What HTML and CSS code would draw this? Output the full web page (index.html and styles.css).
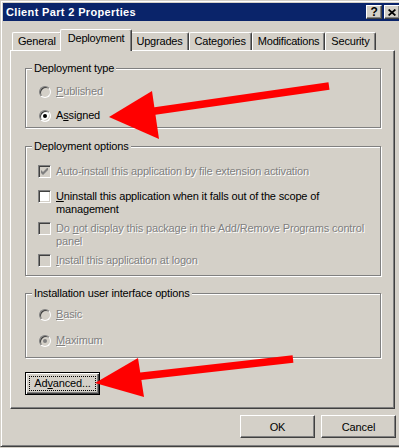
FILE: index.html
```html
<!DOCTYPE html>
<html lang="en">
<head>
    <meta charset="UTF-8">
    <meta name="viewport" content="width=device-width, initial-scale=1.0">
    <title>Client Part 2 Properties</title>
    <link rel="stylesheet" href="styles.css">
</head>
<body>
    <div class="window">
        <div class="titlebar">
            <span class="title">Client Part 2 Properties</span>
            <div class="caption-buttons">
                <span class="caption-btn help">?</span>
                <span class="caption-btn close">
                    <svg width="8" height="7" viewBox="0 0 8 7"><path d="M0.6 0.5 L7.4 6.5 M7.4 0.5 L0.6 6.5" stroke="#000" stroke-width="1.7"/></svg>
                </span>
            </div>
        </div>

        <div class="dialog">
            <div class="tabs">
                <div class="tab">General</div>
                <div class="tab selected">Deployment</div>
                <div class="tab">Upgrades</div>
                <div class="tab">Categories</div>
                <div class="tab">Modifications</div>
                <div class="tab">Security</div>
            </div>

            <div class="panel">
                <fieldset class="group group-type">
                    <legend>Deployment type</legend>
                    <div class="option disabled">
                        <span class="mark"><span class="radio"></span></span>
                        <span class="label"><u>P</u>ublished</span>
                    </div>
                    <div class="option gap-radio">
                        <span class="mark"><span class="radio checked"></span></span>
                        <span class="label">A<u>s</u>signed</span>
                    </div>
                </fieldset>

                <fieldset class="group group-options">
                    <legend>Deployment options</legend>
                    <div class="option disabled">
                        <span class="mark"><span class="check checked"><svg width="7" height="7" viewBox="0 0 7 7"><path d="M0 2 L2 4 L7 -1 L7 2 L2 7 L0 5 Z"/></svg></span></span>
                        <span class="label">Auto-install this application by file extension activation</span>
                    </div>
                    <div class="option gap-wide">
                        <span class="mark"><span class="check"></span></span>
                        <span class="label"><u>U</u>ninstall this application when it falls out of the scope of<br>management</span>
                    </div>
                    <div class="option disabled gap-check">
                        <span class="mark"><span class="check"></span></span>
                        <span class="label">Do <u>n</u>ot display this package in the Add/Remove Programs control<br>panel</span>
                    </div>
                    <div class="option disabled gap-check">
                        <span class="mark"><span class="check"></span></span>
                        <span class="label"><u>I</u>nstall this application at logon</span>
                    </div>
                </fieldset>

                <fieldset class="group group-ui">
                    <legend>Installation user interface options</legend>
                    <div class="option disabled">
                        <span class="mark"><span class="radio"></span></span>
                        <span class="label"><u>B</u>asic</span>
                    </div>
                    <div class="option disabled gap-ui">
                        <span class="mark"><span class="radio checked"></span></span>
                        <span class="label"><u>M</u>aximum</span>
                    </div>
                </fieldset>

                <button class="button default"><span class="focus">Ad<u>v</u>anced...</span></button>
            </div>

            <div class="footer">
                <button class="button">OK</button>
                <button class="button">Cancel</button>
            </div>
        </div>

        <svg class="arrows" width="399" height="448" viewBox="0 0 399 448">
            <line x1="329" y1="86" x2="148" y2="112" stroke="#ff0000" stroke-width="7.5"/>
            <polygon points="109,117 152,91 159,139" fill="#ff0000"/>
            <line x1="293" y1="359" x2="134" y2="377" stroke="#ff0000" stroke-width="7.5"/>
            <polygon points="95,383 138,358 144,397" fill="#ff0000"/>
        </svg>
    </div>
</body>
</html>
```

FILE: styles.css
```css
body {
    margin: 0;
    width: 399px;
    height: 448px;
    overflow: hidden;
    background-color: #d4d0c8;
    font-family: "Liberation Sans", Arial, sans-serif;
    font-size: 11px;
    letter-spacing: -0.15px;
    color: #000;
}

.window {
    position: relative;
    width: 405px;
    height: 447px;
    box-sizing: border-box;
    padding: 2px;
    background-color: #d4d0c8;
    border: 1px solid;
    border-color: #d4d0c8 #404040 #404040 #d4d0c8;
    box-shadow: inset 1px 1px #fff, inset -1px -1px #808080;
}

.titlebar {
    height: 18px;
    background-color: #0a246a;
    display: flex;
    align-items: center;
    justify-content: space-between;
    padding: 0 2px 0 3px;
}

.title {
    color: #fff;
    font-weight: bold;
    line-height: 18px;
    letter-spacing: 0.35px;
}

.caption-buttons {
    display: flex;
    gap: 2px;
}

.caption-btn {
    width: 16px;
    height: 14px;
    box-sizing: border-box;
    background-color: #d4d0c8;
    border: 1px solid;
    border-color: #fff #404040 #404040 #fff;
    box-shadow: inset -1px -1px #808080;
    display: flex;
    align-items: center;
    justify-content: center;
    font-weight: bold;
    font-size: 12px;
    line-height: 12px;
}

.caption-btn svg {
    display: block;
}

.dialog {
    padding: 8px 7px 0 7px;
}

.tabs {
    display: flex;
    align-items: flex-end;
    height: 21px;
    padding-left: 2px;
    position: relative;
    z-index: 1;
    letter-spacing: -0.2px;
}

.tab {
    height: 18px;
    box-sizing: border-box;
    padding: 0 5px;
    line-height: 17px;
    border: 1px solid;
    border-bottom: none;
    border-color: #fff #404040 #404040 #fff;
    border-radius: 2px 2px 0 0;
    box-shadow: inset -1px 0 #808080;
    background-color: #d4d0c8;
}

.tab.selected {
    height: 22px;
    margin: 0 -2px -1px -2px;
    padding: 0 7px 4px 7px;
    position: relative;
    z-index: 2;
}

.panel {
    height: 359px;
    box-sizing: border-box;
    padding: 11px 13px 0 14px;
    border: 1px solid;
    border-color: #fff #404040 #404040 #fff;
    box-shadow: inset -1px -1px #808080;
}

.group {
    margin: 0 0 12px 0;
    padding: 10px 12px 5px 12px;
    min-width: 0;
    border: 1px solid #808080;
    box-shadow: inset 1px 1px #fff, 1px 1px #fff;
}

.group legend {
    margin-left: -6px;
    padding: 0 2px;
    line-height: 13px;
    background-color: #d4d0c8;
}

.group-options {
    padding-top: 12px;
    padding-bottom: 8px;
    margin-bottom: 11px;
}

.group-ui {
    padding-top: 8px;
    padding-bottom: 10px;
    margin-bottom: 14px;
}

.option {
    display: flex;
    align-items: flex-start;
    line-height: 13px;
}

.option.gap-radio {
    margin-top: 11px;
}

.option.gap-wide {
    margin-top: 12px;
}

.option.gap-check {
    margin-top: 6px;
}

.option.gap-ui {
    margin-top: 13px;
}

.mark {
    width: 13px;
    height: 13px;
    display: flex;
    align-items: center;
    justify-content: center;
    flex-shrink: 0;
}

.label {
    margin-left: 5px;
    white-space: nowrap;
}

.disabled .label {
    color: #808080;
    text-shadow: 1px 1px 0 #fff;
}

.radio {
    width: 12px;
    height: 12px;
    box-sizing: border-box;
    border-radius: 50%;
    border: 1px solid;
    border-color: #808080 #fff #fff #808080;
    box-shadow: inset 1px 1px #404040, inset -1px -1px #d4d0c8;
    background-color: #fff;
    display: flex;
    align-items: center;
    justify-content: center;
}

.radio.checked::after {
    content: "";
    width: 4px;
    height: 4px;
    border-radius: 50%;
    background-color: #000;
}

.disabled .radio {
    background-color: #d4d0c8;
}

.disabled .radio.checked::after {
    background-color: #808080;
}

.check {
    width: 13px;
    height: 13px;
    box-sizing: border-box;
    border: 1px solid;
    border-color: #808080 #fff #fff #808080;
    box-shadow: inset 1px 1px #404040, inset -1px -1px #d4d0c8;
    background-color: #fff;
    display: flex;
    align-items: center;
    justify-content: center;
}

.check svg {
    display: block;
    fill: #000;
}

.disabled .check {
    background-color: #d4d0c8;
}

.disabled .check svg {
    fill: #808080;
}

.button {
    width: 75px;
    height: 23px;
    box-sizing: border-box;
    padding: 0;
    margin: 0;
    font-family: inherit;
    font-size: 11px;
    letter-spacing: inherit;
    color: #000;
    background-color: #d4d0c8;
    border: 1px solid;
    border-color: #fff #404040 #404040 #fff;
    box-shadow: inset -1px -1px #808080;
    display: block;
}

.button.default {
    border-color: #000;
    box-shadow: inset 1px 1px #fff, inset -1px -1px #404040, inset -2px -2px #808080;
}

.focus {
    display: block;
    margin: 3px;
    height: 15px;
    box-sizing: border-box;
    border: 1px dotted #000;
    line-height: 13px;
}

.footer {
    display: flex;
    justify-content: flex-end;
    gap: 6px;
    margin: 6px -1px 0 0;
}

.arrows {
    position: absolute;
    left: -1px;
    top: -1px;
    pointer-events: none;
}
```
